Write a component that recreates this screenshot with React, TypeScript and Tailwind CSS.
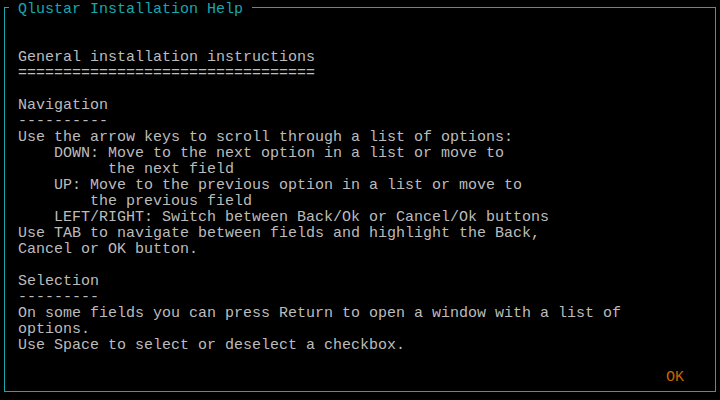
const TEAL = 'border-[#16a8ae]';

const helpLines = [
  '',
  '',
  'General installation instructions',
  '=================================',
  '',
  'Navigation',
  '----------',
  'Use the arrow keys to scroll through a list of options:',
  '    DOWN: Move to the next option in a list or move to',
  '          the next field',
  '    UP: Move to the previous option in a list or move to',
  '        the previous field',
  '    LEFT/RIGHT: Switch between Back/Ok or Cancel/Ok buttons',
  'Use TAB to navigate between fields and highlight the Back,',
  'Cancel or OK button.',
  '',
  'Selection',
  '---------',
  'On some fields you can press Return to open a window with a list of',
  'options.',
  'Use Space to select or deselect a checkbox.',
  '',
];

export default function App() {
  return (
    <div
      className="flex h-[400px] w-[720px] flex-col bg-black px-[4px] pb-[8px] text-[15px] leading-4 text-[#bcbcbc]"
      style={{ fontFamily: '"Liberation Mono", "DejaVu Sans Mono", monospace' }}
    >
      {/* title row with the top border */}
      <div className="flex h-4 shrink-0">
        <div className={`mt-[7px] h-[9px] w-[5px] border-l border-t ${TEAL}`} />
        <span className="ml-[9px] whitespace-pre pt-[2px] text-[#16a8ae]">
          Qlustar Installation Help
        </span>
        <div className={`ml-[9px] mt-[7px] h-[9px] flex-1 border-r border-t ${TEAL}`} />
      </div>

      <div className={`flex flex-1 flex-col border-b border-l border-r ${TEAL} pl-[13px] pt-[2px]`}>
        {helpLines.map((line, i) => (
          <div key={i} className="h-4 whitespace-pre">
            {line}
          </div>
        ))}
        <div className="h-4 whitespace-pre pl-[648px] text-[#c86400]">OK</div>
      </div>
    </div>
  );
}
